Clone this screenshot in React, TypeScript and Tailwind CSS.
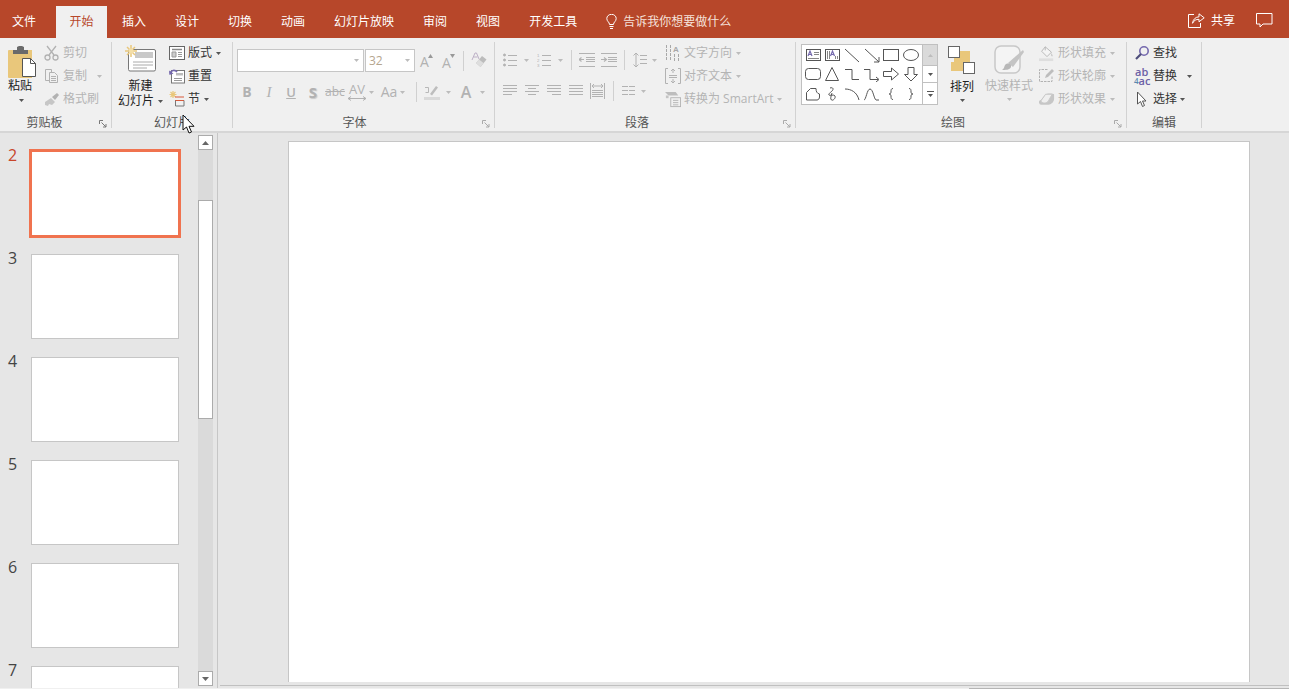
import type { ReactNode } from "react";

const G = "#b2b2b2";
const D = "#6a6a6a";
const Y = "#e9c77b";
const P = "#7468ad";

const Caret = ({ dark, className = "" }: { dark?: boolean; className?: string }) => (
  <svg width="5" height="3" viewBox="0 0 5 3" className={"shrink-0 " + className}>
    <path d="M0 0h5L2.5 3z" fill={dark ? "#555" : "#bcbcbc"} />
  </svg>
);

const VSep = ({ className = "" }: { className?: string }) => (
  <div className={"w-px h-[20px] bg-[#d0d0d0] shrink-0 " + className} />
);

const Launcher = ({ dark }: { dark?: boolean }) => (
  <svg width="8" height="8" viewBox="0 0 8 8" className="absolute right-[4px] bottom-[0px]">
    <path d="M.5 4V.5H4M2.5 2.5L7 7M7 4v3H4" fill="none" stroke={dark ? "#777" : "#aaa"} />
  </svg>
);

/* clipboard */
const PasteIcon = () => (
  <svg width="28" height="33" viewBox="0 0 28 33">
    <path d="M1 5h23v28H1a1 1 0 0 1-1-1V6a1 1 0 0 1 1-1z" fill={Y} />
    <path d="M5 9V5h4V2l2-1h3l2 1v3h4v4z" fill={D} />
    <path d="M14.5 13.5h8l5 5v13h-13z" fill="#fff" stroke="#555" />
    <path d="M22.5 13.5v5h5" fill="none" stroke="#555" />
  </svg>
);

const Scissors = () => (
  <svg width="16" height="16" viewBox="0 0 16 16" fill="none" stroke={G} strokeWidth="1.3">
    <path d="M3 1l7 9M12 1L5 10" />
    <circle cx="3.5" cy="12.5" r="2.5" />
    <circle cx="11.5" cy="12.5" r="2.5" />
  </svg>
);

const CopyIcon = () => (
  <svg width="16" height="16" viewBox="0 0 16 16" fill="#f0f0f0" stroke={G}>
    <path d="M1.5 1.5h6v11h-6z" />
    <path d="M5.5 4.5h5l3 3v7h-8z" />
    <path d="M7 8.5h5M7 10.5h5M7 12.5h5" />
  </svg>
);

const BrushIcon = () => (
  <svg width="16" height="16" viewBox="0 0 16 16">
    <path d="M1 11l6-4 4 4-3 3-3-1-1 2-3-1z" fill="#c6c6c6" />
    <path d="M8 6l5-4 2 2-4 5z" fill={G} />
  </svg>
);

const NewSlideIcon = () => (
  <svg width="31" height="27" viewBox="0 0 31 27">
    <rect x="3.5" y="4.5" width="27" height="21.5" rx="1.5" fill="#fff" stroke="#777" />
    <rect x="10" y="7" width="18" height="6" fill="#c9c9c9" />
    <path d="M8 17h20M8 20h20M8 23h14" stroke="#aaa" />
    <g stroke={Y} strokeWidth="1.5">
      <path d="M6 0v12M0 6h12M2 2l8 8M10 2l-8 8" />
    </g>
    <circle cx="6" cy="6" r="2.5" fill="#f4dfa8" />
  </svg>
);

const LayoutIcon = () => (
  <svg width="16" height="14" viewBox="0 0 16 14" fill="none" stroke="#666">
    <rect x=".5" y=".5" width="15" height="13" fill="#fff" />
    <path d="M3 3.5h10" stroke="#888" strokeWidth="1.5" />
    <path d="M3 6h4v5H3z" fill="#ccc" stroke="#999" />
    <path d="M9 6.5h4M9 8.5h4M9 10.5h4" stroke="#999" />
  </svg>
);

const ResetIcon = () => (
  <svg width="16" height="16" viewBox="0 0 16 16" fill="none">
    <rect x="2.5" y="2.5" width="13" height="12.5" fill="#fff" stroke="#777" />
    <path d="M7 5h7v2.5H7z" fill="#bbb" />
    <path d="M5 10.5h8M5 12.5h8" stroke="#999" />
    <path d="M1 5.5C2 2 6 1.5 8 4" stroke={P} strokeWidth="1.6" />
    <path d="M0 2.5l.5 4.500 4-1.500z" fill={P} />
  </svg>
);

const SectionIcon = () => (
  <svg width="16" height="16" viewBox="0 0 16 16" fill="none">
    <path d="M4 0v7M.5 3.5h7M1.5 1l5 5M6.500 1l-5 5" stroke={Y} strokeWidth="1.2" />
    <path d="M6 6h9M6 9.500h9" stroke="#d8593a" />
    <path d="M6.500 9.500v5.500h8.500V9.500" stroke="#777" />
  </svg>
);

const GrowA = ({ down }: { down?: boolean }) => (
  <span className="flex items-start w-[14px] h-[14px] text-[#b2b2b2]">
    <span className={"text-[14px] leading-[16px] " + (down ? "mt-[1px]" : "")}>A</span>
    <svg width="5" height="4" viewBox="0 0 5 4" className="mt-[0px] ml-[-1px]">
      <path d={down ? "M0 0h5L2.500 4z" : "M2.500 0L5 4H0z"} fill="#999" />
    </svg>
  </span>
);

const Eraser = () => (
  <svg width="16" height="17" viewBox="0 0 16 17">
    <path d="M1 8L4 1h1.500L8 7M2.500 5h4" fill="none" stroke="#bdb0c6" />
    <path d="M5 11l6-7 4.500 3.500-6 7.500z" fill="#bcbcbc" />
    <path d="M5 11l3-3.500 4.500 3.500-3 4z" fill="#dedede" />
  </svg>
);

const HighlightIcon = () => (
  <svg width="16" height="16" viewBox="0 0 16 16">
    <path d="M1 3.500h3.500v5H1.500" fill="none" stroke="#b8b8b8" />
    <path d="M6 10l6-8 2 1.500-6 8z" fill="#bdbdbd" />
    <rect x="0" y="13" width="16" height="3" fill="#d9d9d9" />
  </svg>
);

const lines = (ys: number[], x1: number, x2: number) =>
  ys.map((y) => `M${x1} ${y}H${x2}`).join("");

const Lines = ({ d, w = 14, h = 14 }: { d: string; w?: number; h?: number }) => (
  <svg width={w} height={h} viewBox={`0 0 ${w} ${h}`} fill="none" stroke={G} className="shrink-0">
    <path d={d} />
  </svg>
);

const Bullets = () => (
  <svg width="14" height="14" viewBox="0 0 14 14" fill={G} stroke={G}>
    <circle cx="1.5" cy="2" r="1" />
    <circle cx="1.5" cy="7" r="1" />
    <circle cx="1.5" cy="12" r="1" />
    <path d="M5 2.500h9M5 7.500h9M5 12.500h9" />
  </svg>
);

const Numbers = () => (
  <svg width="14" height="15" viewBox="0 0 14 15" stroke={G} fontFamily="Liberation Sans">
    <text x="0" y="4.2" fontSize="4.3" fill={G} stroke="none">1</text>
    <text x="0" y="9.2" fontSize="4.3" fill={G} stroke="none">2</text>
    <text x="0" y="14.2" fontSize="4.3" fill={G} stroke="none">3</text>
    <path d="M5 2.500h9M5 7.500h9M5 12.500h9" />
  </svg>
);

const Indent = ({ inc }: { inc?: boolean }) => (
  <svg width="16" height="14" viewBox="0 0 16 14" fill="none" stroke={G}>
    <path d={lines([0.5, 13.5], 0, 16) + lines([4.5, 6.5, 8.5], 7, 16)} />
    <path d={inc ? "M0 6.500h5M3 4.500l2.500 2-2.500 2" : "M0 6.500h5M2.500 4.500l-2.500 2 2.500 2"} strokeWidth="1.2" />
  </svg>
);

const LineSpacing = () => (
  <svg width="14" height="16" viewBox="0 0 14 16" fill="none" stroke={G}>
    <path d="M3 1v14M.5 3.500L3 1l2.500 2.500M.5 12.500L3 15l2.500-2.500" />
    <path d={lines([3.5, 7.5, 11.5], 7, 14)} />
  </svg>
);

const TextDir = () => (
  <svg width="16" height="17" viewBox="0 0 16 17" fill="none" stroke="#a8a8a8" fontFamily="Liberation Sans">
    <path d="M1.500 0v16M5.500 0v16M9.500 9v7M13.500 9v7" strokeDasharray="3 1" />
    <text x="8" y="7" fontSize="8" fontWeight="700" fill="#a8a8a8" stroke="none">A</text>
  </svg>
);

const AlignText = () => (
  <svg width="16" height="16" viewBox="0 0 16 16" fill="none" stroke={G}>
    <path d="M3 .5H.5v15H3M13 .5h2.500v15H13" />
    <path d="M8 1v4M6 3l2-2 2 2M8 15v-4M6 13l2 2 2-2M4 7.500h8M4 9.500h8" />
  </svg>
);

const SmartArtIcon = () => (
  <svg width="18" height="17" viewBox="0 0 18 17">
    <path d="M0 0h12l3 4H4z" fill="#bdbdbd" />
    <path d="M1 4h3v3H1z" fill="#c4c4c4" />
    <rect x="6.500" y="6.500" width="11" height="10" fill="none" stroke={G} />
    <path d="M9 9.500h6M9 12h6M9 14.500h6" stroke={G} />
  </svg>
);

const ArrangeIcon = () => (
  <svg width="28" height="28" viewBox="0 0 28 28">
    <rect x="6" y="5" width="16" height="11" fill={Y} />
    <rect x="3" y="16" width="13" height="9" fill={Y} />
    <rect x=".5" y=".5" width="11" height="11" fill="#fff" stroke="#666" />
    <rect x="15.500" y="16.500" width="11" height="11" fill="#fff" stroke="#666" />
  </svg>
);

const QuickStyleIcon = () => (
  <svg width="31" height="30" viewBox="0 0 31 30" fill="none">
    <rect x="1" y="1" width="25" height="27" rx="6" stroke="#c8c8c8" strokeWidth="1.5" fill="#f4f4f4" />
    <path d="M14 18L29 5l1 2-11 15z" fill="#c4c4c4" />
    <path d="M11 20c3-3 7-1 6 2-1 3-6 3-9 3 2-1 2-3 3-5z" fill="#b8b8b8" />
  </svg>
);

const FillIcon = () => (
  <svg width="18" height="17" viewBox="0 0 18 17">
    <path d="M7 1l7 6-5 5-6-6z" fill="#f4f4f4" stroke={G} />
    <path d="M7 1V5" stroke={G} />
    <path d="M14 8c1 2 2 3 1 4-1 0-2-1-1-4z" fill="#c8c8c8" />
    <rect x="0" y="14" width="16" height="3" fill="#dedede" />
  </svg>
);

const OutlineIcon = () => (
  <svg width="16" height="16" viewBox="0 0 16 16" fill="none">
    <path d="M13 8.500v5H.5v-12H9" stroke={G} strokeDasharray="2.500 1" />
    <path d="M6 10l1-3 6-6 2 2-6 6z" fill="#bdbdbd" />
  </svg>
);

const EffectIcon = () => (
  <svg width="17" height="14" viewBox="0 0 17 14">
    <path d="M3 13a2.500 2.500 0 0 1-1-5l5-6c1-1 8-1 9 0v5c0 3-3 6-6 6z" fill="#c6c6c6" />
    <path d="M2 9l5-7h7l-4 7c-2 3-7 3-8 0z" fill="#efefef" stroke="#c6c6c6" />
  </svg>
);

const FindIcon = () => (
  <svg width="16" height="16" viewBox="0 0 16 16" fill="none">
    <circle cx="10" cy="6" r="4.2" stroke={P} strokeWidth="1.6" />
    <path d="M7 9l-5 5" stroke="#4d4d7a" strokeWidth="2.2" />
  </svg>
);

const ReplaceIcon = () => (
  <span className="flex flex-col w-[16px] text-[11px] leading-[9px] font-semibold text-[#6c60a6]">
    <span className="pl-[1px]">ab</span>
    <span className="flex">
      <span className="text-[8px] text-[#5b8ab0]">4</span>
      <span>ac</span>
    </span>
  </span>
);

const SelectIcon = () => (
  <svg width="12" height="17" viewBox="0 0 12 17">
    <path d="M1.500 1v12l3-2.500 2 5 2-1-2-4.500H10z" fill="#fff" stroke="#555" />
  </svg>
);

const BulbIcon = () => (
  <svg width="11" height="15" viewBox="0 0 11 15" fill="none" stroke="#fff">
    <path d="M3.500 10.500C3.500 8 .8 7.500.8 4.500a4.700 4.200 0 0 1 9.400 0c0 3-2.700 3.500-2.700 6z" />
    <path d="M3.500 12.500h4M4 14.500h3" />
  </svg>
);

const ShareIcon = () => (
  <svg width="17" height="15" viewBox="0 0 17 15" fill="none" stroke="#fff">
    <path d="M6 1.500H.5v13h12V10" />
    <path d="M11 .8l5.200 4-5.200 4V6.300c-3 0-5 1-6.500 4 .5-4 3-6.300 6.500-6.500z" />
  </svg>
);

const CommentIcon = () => (
  <svg width="17" height="15" viewBox="0 0 17 15" fill="none" stroke="#fff">
    <path d="M.5.500h15.500v10.500H7l-3 3v-3H.5z" />
  </svg>
);

const shapes: ReactNode[] = [
  <>
    <rect x="1.500" y="2.500" width="14" height="11" fill="#fff" />
    <rect x="1.500" y="2.500" width="14" height="11" />
    <path d="M3 9l2-5 2 5M3.800 7.500h2.400" stroke={P} strokeWidth="1.2" />
    <path d="M9 5.500h5M9 7.500h5M3 11.500h11" stroke="#888" />
  </>,
  <>
    <rect x="1.500" y="2.500" width="14" height="11" />
    <path d="M6.500 9l2-5 2 5M7.300 7.500h2.400" stroke={P} strokeWidth="1.2" />
    <path d="M3.500 4v8M5.500 4v8M11.500 9v3M13.500 9v3" stroke="#888" />
  </>,
  <path d="M1 2l14 13" />,
  <path d="M1 2l14 13M10 15h5v-5" />,
  <rect x=".5" y="2.500" width="15" height="11" />,
  <ellipse cx="8" cy="8" rx="7.500" ry="5.500" />,
  <rect x=".5" y="2.500" width="15" height="11" rx="3" />,
  <path d="M8 1.500l6.500 13h-13z" />,
  <path d="M1 3.500h7v10h7" />,
  <path d="M0 3.500h6v10h8M12 11l3 2.500-3 2.500" />,
  <path d="M.5 5.500h8V2l7 6-7 6v-3.500h-8z" />,
  <path d="M5 1.500h6v7h3.500L8 15 1.500 8.500H5z" />,
  <path d="M1.500 14V6.500l4-4H11c0 3 1 5 3.500 5.500v3c0 1.500-1 3-2.500 3z" />,
  <path d="M6 2c3-1 4 1 2 3S4 8 5 9s5-1 6 1-2 5-3.500 4S7 10 8 7" />,
  <path d="M1 3c6 0 12 3 14 11" />,
  <path d="M0 14C2 14 3 3 6 3s4 10 6 11h3" />,
  <path d="M10 2.500C8 2.500 8 4 8 6c0 1.500-1 2-2 2 1 0 2 .5 2 2 0 2 0 3.500 2 3.500" />,
  <path d="M6 2.500C8 2.500 8 4 8 6c0 1.500 1 2 2 2-1 0-2 .5-2 2 0 2 0 3.500-2 3.500" />,
];

const SmallRow = ({
  icon,
  label,
  off,
  caret,
  gap = "ml-[6px]",
}: {
  icon: ReactNode;
  label: string;
  off?: boolean;
  caret?: boolean;
  gap?: string;
}) => (
  <div className={"flex items-center h-[20px] " + (off ? "text-[#b4b4b4]" : "text-[#333]")}>
    <span className="flex items-center justify-center w-[16px] shrink-0">{icon}</span>
    <span className="ml-[3px] whitespace-nowrap">{label}</span>
    {caret && <Caret dark={!off} className={gap} />}
  </div>
);

const Group = ({
  width,
  label,
  labelPad = "",
  launcher,
  dark,
  children,
}: {
  width: string;
  label: string;
  labelPad?: string;
  launcher?: boolean;
  dark?: boolean;
  children: ReactNode;
}) => (
  <div className={"relative flex flex-col h-[86px] border-r border-[#d2d2d2] shrink-0 " + width}>
    <div className="flex-1 flex min-h-0">{children}</div>
    <div className={"h-[12px] text-center leading-[14px] text-[#555] " + labelPad}>{label}</div>
    {launcher && <Launcher dark={dark} />}
  </div>
);

const tabs = ["插入", "设计", "切换", "动画", "幻灯片放映", "审阅", "视图", "开发工具"];

const TabBar = () => (
  <div className="flex items-end h-[38px] bg-[#b7472a] text-white text-[12px]">
    <div className="h-[32px] pl-[12px] pr-[20px] pb-[1px] flex items-center">文件</div>
    <div className="h-[32px] w-[51px] flex items-center justify-center pb-[1px] bg-[#f0f0f0] text-[#b7472a]">
      开始
    </div>
    <div className="flex h-[32px] pl-[15px] gap-[29px] pb-[1px]">
      {tabs.map((t) => (
        <div key={t} className="flex items-center whitespace-nowrap">
          {t}
        </div>
      ))}
    </div>
    <div className="h-[32px] flex items-center pl-[29px] pb-[1px] gap-[6px] text-[#f5e1da]">
      <BulbIcon />
      <span>告诉我你想要做什么</span>
    </div>
    <div className="ml-auto h-[32px] flex items-center pb-[3px] pr-[16px]">
      <ShareIcon />
      <span className="ml-[6px]">共享</span>
      <span className="ml-[21px]">
        <CommentIcon />
      </span>
    </div>
  </div>
);

const Ribbon = () => (
  <div className="flex h-[95px] pt-[4px] bg-[#f0f0f0] border-b-2 border-[#d6d6d6] text-[12px] leading-[14px]">
    <Group width="w-[112px]" label="剪贴板" labelPad="pr-[22px]" launcher dark>
      <div className="pl-[8px] flex">
        <div className="w-[28px] pt-[3px] flex flex-col items-center">
          <PasteIcon />
          <div className="w-[24px] mt-[1px] text-[#222] mr-[4px]">粘贴</div>
          <Caret dark className="mt-[6px] mr-[2px]" />
        </div>
        <div className="ml-[8px] pt-[1px] flex flex-col gap-[3px]">
          <SmallRow icon={<Scissors />} label="剪切" off />
          <SmallRow icon={<CopyIcon />} label="复制" off caret gap="ml-[10px]" />
          <SmallRow icon={<BrushIcon />} label="格式刷" off />
        </div>
      </div>
    </Group>

    <Group width="w-[121px]" label="幻灯片">
      <div className="pl-[6px] flex">
        <div className="w-[45px] pt-[3px] flex flex-col items-center text-[#222]">
          <NewSlideIcon />
          <div className="mt-[7px]">新建</div>
          <div className="flex items-center whitespace-nowrap mt-[1px]">
            幻灯片
            <Caret dark className="ml-[4px]" />
          </div>
        </div>
        <div className="ml-[6px] pt-[1px] flex flex-col gap-[3px]">
          <SmallRow icon={<LayoutIcon />} label="版式" caret gap="ml-[4px]" />
          <SmallRow icon={<ResetIcon />} label="重置" />
          <SmallRow icon={<SectionIcon />} label="节" caret gap="ml-[4px]" />
        </div>
      </div>
    </Group>

    <Group width="w-[262px]" label="字体" labelPad="pr-[18px]" launcher>
      <div className="flex flex-col">
        <div className="flex items-center pt-[7px] pl-[4px]">
          <div className="flex items-center justify-end w-[127px] h-[23px] pr-[4px] bg-white border border-[#c6c6c6]">
            <Caret />
          </div>
          <div className="flex items-center justify-between w-[50px] h-[23px] ml-[1px] pl-[3px] pr-[4px] bg-white border border-[#c6c6c6] text-[#b5a68f]">
            32
            <Caret />
          </div>
          <div className="ml-[5px]">
            <GrowA />
          </div>
          <div className="ml-[8px]">
            <GrowA down />
          </div>
          <VSep className="ml-[7px]" />
          <div className="ml-[7px]">
            <Eraser />
          </div>
        </div>
        <div className="flex items-center h-[20px] mt-[10px] pl-[3px] text-[#b2b2b2]">
          <span className="w-[22px] text-center font-bold text-[14px]">B</span>
          <span className="w-[22px] text-center italic font-['Liberation_Serif',serif] text-[15px]">I</span>
          <span className="w-[22px] text-center font-semibold underline text-[13px]">U</span>
          <span className="w-[22px] text-center font-bold text-[15px] [text-shadow:1px_1px_1px_#c8c8c8]">S</span>
          <span className="w-[22px] text-center text-[12px] line-through">abc</span>
          <span className="w-[22px] flex flex-col items-center text-[13px] leading-[13px] -mt-[1px]">
            AV
            <Lines w={18} h={5} d="M0 2.500h18M3 .5l-3 2 3 2M15 .5l3 2-3 2" />
          </span>
          <Caret className="ml-[1px]" />
          <span className="w-[18px] ml-[6px] text-center text-[14px]">Aa</span>
          <Caret className="ml-[2px]" />
          <VSep className="ml-[11px]" />
          <span className="ml-[7px]">
            <HighlightIcon />
          </span>
          <Caret className="ml-[6px]" />
          <span className="w-[14px] ml-[8px] text-center text-[16px] font-semibold">A</span>
          <Caret className="ml-[7px]" />
        </div>
      </div>
    </Group>

    <Group width="w-[301px]" label="段落" labelPad="pr-[16px]" launcher>
      <div className="w-[170px] pl-[8px] shrink-0">
        <div className="flex items-center h-[20px] mt-[8px]">
          <Bullets />
          <Caret className="ml-[7px]" />
          <span className="ml-[8px] flex">
            <Numbers />
          </span>
          <Caret className="ml-[7px]" />
          <VSep className="ml-[8px]" />
          <span className="ml-[7px] flex">
            <Indent />
          </span>
          <span className="ml-[6px] flex">
            <Indent inc />
          </span>
          <VSep className="ml-[7px]" />
          <span className="ml-[8px] flex">
            <LineSpacing />
          </span>
          <Caret className="ml-[5px]" />
        </div>
        <div className="flex items-center h-[20px] mt-[11px]">
          <Lines d={lines([1.5, 4.5, 7.5], 0, 14) + "M0 10.500H9"} />
          <span className="ml-[8px] flex">
            <Lines d={lines([1.5, 7.5], 0, 14) + "M3 4.500H11M3 10.500H11"} />
          </span>
          <span className="ml-[8px] flex">
            <Lines d={lines([1.5, 4.5, 7.5], 0, 14) + "M5 10.500H14"} />
          </span>
          <span className="ml-[8px] flex">
            <Lines d={lines([1.5, 4.5, 7.5, 10.5], 0, 14)} />
          </span>
          <span className="ml-[7px] flex">
            <Lines
              w={15}
              h={16}
              d="M.5 0v16M14.500 0v16M2 3h11M4 1l-2 2 2 2M11 1l2 2-2 2M2 7.500h11M2 9.500h11M2 11.500h11M2 13.500h11"
            />
          </span>
          <VSep className="ml-[8px]" />
          <span className="ml-[8px] flex">
            <Lines w={13} d={lines([2.5, 6.5, 10.5], 0, 6) + lines([2.5, 6.5, 10.5], 7, 13)} />
          </span>
          <Caret className="ml-[6px]" />
        </div>
      </div>
      <div className="pt-[1px] flex flex-col gap-[3px] text-[#b4b4b4]">
        <SmallRow icon={<TextDir />} label="文字方向" off caret gap="ml-[4px]" />
        <SmallRow icon={<AlignText />} label="对齐文本" off caret gap="ml-[4px]" />
        <SmallRow icon={<SmartArtIcon />} label="转换为 SmartArt" off caret gap="ml-[4px]" />
      </div>
    </Group>

    <Group width="w-[331px]" label="绘图" labelPad="pr-[16px]" launcher>
      <div className="flex pl-[5px] pt-[2px] items-start">
        <div className="grid grid-cols-6 w-[122px] h-[61px] bg-white border border-[#c0c0c0] place-items-center px-[1px]">
          {shapes.map((s, i) => (
            <svg key={i} width="16" height="16" viewBox="0 0 16 16" fill="none" stroke="#555">
              {s}
            </svg>
          ))}
        </div>
        <div className="flex flex-col w-[15px] h-[61px] border border-l-0 border-[#c0c0c0]">
          <div className="h-[21px] flex items-center justify-center bg-[#dadada] border-b border-[#c0c0c0]">
            <Caret className="rotate-180" />
          </div>
          <div className="flex-1 flex items-center justify-center bg-white border-b border-[#c0c0c0]">
            <Caret dark />
          </div>
          <div className="h-[21px] flex flex-col gap-[2px] items-center justify-center bg-white">
            <div className="w-[7px] h-px bg-[#555]" />
            <Caret dark />
          </div>
        </div>
        <div className="ml-[10px] w-[28px] pt-[2px] flex flex-col items-center text-[#222]">
          <ArrangeIcon />
          <div className="mt-[6px] whitespace-nowrap">排列</div>
          <Caret dark className="mt-[5px]" />
        </div>
        <div className="ml-[9px] w-[48px] pt-[1px] flex flex-col items-center text-[#b4b4b4]">
          <QuickStyleIcon />
          <div className="mt-[4px] whitespace-nowrap">快速样式</div>
          <Caret className="mt-[5px]" />
        </div>
        <div className="ml-[6px] -mt-[1px] flex flex-col gap-[3px]">
          <SmallRow icon={<FillIcon />} label="形状填充" off caret gap="ml-[4px]" />
          <SmallRow icon={<OutlineIcon />} label="形状轮廓" off caret gap="ml-[4px]" />
          <SmallRow icon={<EffectIcon />} label="形状效果" off caret gap="ml-[4px]" />
        </div>
      </div>
    </Group>

    <Group width="w-[75px]" label="编辑">
      <div className="pl-[7px] pt-[1px] flex flex-col gap-[3px]">
        <SmallRow icon={<FindIcon />} label="查找" />
        <SmallRow icon={<ReplaceIcon />} label="替换" caret gap="ml-[10px]" />
        <SmallRow icon={<SelectIcon />} label="选择" caret gap="ml-[3px]" />
      </div>
    </Group>
  </div>
);

const ScrollBtn = ({ up }: { up?: boolean }) => (
  <div className="h-[15px] shrink-0 flex items-center justify-center bg-white border border-[#ababab]">
    <svg width="7" height="4" viewBox="0 0 7 4">
      <path d={up ? "M3.500 0L7 4H0z" : "M0 0h7L3.500 4z"} fill="#666" />
    </svg>
  </div>
);

const SlideList = () => (
  <div className="flex w-[217px] shrink-0 overflow-hidden">
    <div className="w-[198px] pt-[18px] flex flex-col gap-[18px] shrink-0">
      {[2, 3, 4, 5, 6, 7].map((n) => (
        <div key={n} className="flex shrink-0">
          <div
            className={
              "w-[31px] pl-[8px] -mt-[7px] text-[16px] leading-[22px] font-['Open_Sans',sans-serif] " +
              (n === 2 ? "text-[#c8452a]" : "text-[#444]")
            }
          >
            {n}
          </div>
          <div
            className={
              "w-[148px] h-[85px] bg-white border " +
              (n === 2
                ? "border-[#f0734f] outline-[3px] outline-offset-[-1px] outline-[#f0734f]"
                : "border-[#c6c6c6]")
            }
          />
        </div>
      ))}
    </div>
    <div className="w-[15px] h-[551px] mt-[2px] flex flex-col bg-[#dadada] shrink-0">
      <ScrollBtn up />
      <div className="h-[50px] shrink-0" />
      <div className="h-[219px] shrink-0 bg-white border border-[#ababab]" />
      <div className="flex-1" />
      <ScrollBtn />
    </div>
  </div>
);

const Editor = () => (
  <div className="flex-1 flex flex-col min-w-0 border-l border-[#c6c6c6] pt-[8px]">
    <div className="ml-[70px] w-[962px] h-[541px] shrink-0 bg-white border border-b-0 border-[#c6c6c6]" />
    <div className="mt-[3px] ml-[2px] h-px bg-[#c0c0c0]" />
  </div>
);

export default function App() {
  return (
    <div className="relative h-[689px] overflow-hidden bg-[#e6e6e6] font-['Open_Sans','Noto_Sans_CJK_SC',sans-serif]">
      <TabBar />
      <Ribbon />
      <div className="flex h-[555px]">
        <SlideList />
        <Editor />
      </div>
      <div className="flex h-[2px]">
        <div className="w-[969px] bg-[#f0f0f0]" />
        <div className="flex-1 bg-[#b5b5b5]" />
      </div>
      {/* mouse pointer from the recording */}
      <svg width="14" height="20" viewBox="0 0 14 20" className="absolute left-[182px] top-[114px]">
        <path d="M1 1v15l3.500-3 2.500 6 2.500-1-2.500-5.700H12z" fill="#fff" stroke="#111" />
      </svg>
    </div>
  );
}
